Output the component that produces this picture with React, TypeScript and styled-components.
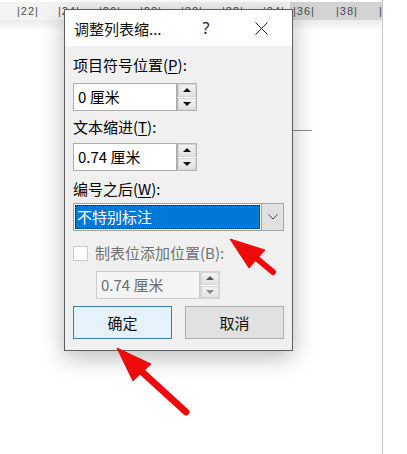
import styled, { createGlobalStyle } from "styled-components";

const GlobalStyle = createGlobalStyle`
  html, body {
    margin: 0;
    padding: 0;
    background: #fff;
  }
  body {
    font-family: "Noto Sans CJK SC", "Noto Sans", sans-serif;
  }
`;

const Page = styled.div`
  position: relative;
  width: 407px;
  height: 454px;
  overflow: hidden;
  background: #fff;
`;

const Sheet = styled.div`
  width: 382px;
  height: 100%;
  border-right: 1px solid #c9c9c9;
  display: flex;
  flex-direction: column;
`;

const Ruler = styled.div`
  display: flex;
  height: 18px;
  margin-top: 2px;
  background: linear-gradient(to right, #f3f3f3 0 290px, #d3d3d3 290px);
`;

const RulerGroup = styled.div<{ $width: number; $pad: number }>`
  display: flex;
  width: ${(p) => p.$width}px;
  padding-left: ${(p) => p.$pad}px;
  box-sizing: border-box;
`;

const RulerMark = styled.span<{ $step: number }>`
  flex: 0 0 ${(p) => p.$step}px;
  font-family: "Liberation Sans", sans-serif;
  font-size: 11px;
  line-height: 18px;
  color: #4a4a4a;
  letter-spacing: 1px;
  white-space: pre;
`;

const Shade = styled.div`
  height: 10px;
  background: linear-gradient(#ebebeb, #f6f6f6 70%, #fff);
`;

const DocLine = styled.div`
  margin: 100px 0 0 250px;
  width: 62px;
  height: 1px;
  background: #8c8c8c;
`;

const Dialog = styled.div`
  position: absolute;
  top: 9px;
  left: 64px;
  width: 229px;
  height: 342px;
  box-sizing: border-box;
  border: 1px solid #5f5f5f;
  background: #f0f0f0;
  box-shadow: 0 6px 22px rgba(0, 0, 0, 0.28);
  display: flex;
  flex-direction: column;
`;

const TitleBar = styled.div`
  height: 36px;
  background: #fff;
  display: flex;
  align-items: center;
  padding: 0 16px 0 9px;
`;

const Title = styled.span`
  font-size: 15px;
  color: #111;
  flex: 1;
`;

const TitleButton = styled.span`
  width: 30px;
  height: 30px;
  display: flex;
  align-items: center;
  justify-content: center;
  font-family: "Noto Sans", sans-serif;
  font-size: 16px;
  color: #222;
  & + & {
    margin-left: 25px;
  }
`;

const Body = styled.div`
  flex: 1;
  padding: 0 8px;
  display: flex;
  flex-direction: column;
`;

const Label = styled.div<{ $mt: number; $disabled?: boolean }>`
  margin-top: ${(p) => p.$mt}px;
  height: 20px;
  font-size: 15px;
  line-height: 20px;
  color: ${(p) => (p.$disabled ? "#707070" : "#000")};
  display: flex;
  align-items: center;
  u {
    text-decoration: underline;
    text-underline-offset: 2px;
  }
`;

const SpinRow = styled.div<{ $mt: number; $indent?: number }>`
  margin-top: ${(p) => p.$mt}px;
  margin-left: ${(p) => p.$indent || 0}px;
  display: flex;
  height: 28px;
`;

const TextField = styled.div<{ $disabled?: boolean }>`
  width: 104px;
  box-sizing: border-box;
  border: 1px solid ${(p) => (p.$disabled ? "#cccccc" : "#adadad")};
  background: ${(p) => (p.$disabled ? "#f4f4f4" : "#fff")};
  color: ${(p) => (p.$disabled ? "#6d6d6d" : "#000")};
  font-size: 15px;
  line-height: 26px;
  padding-left: 4px;
`;

const Spinner = styled.div<{ $disabled?: boolean }>`
  width: 20px;
  box-sizing: border-box;
  border: 1px solid ${(p) => (p.$disabled ? "#d4d4d4" : "#b4b4b4")};
  display: flex;
  flex-direction: column;
  gap: 1px;
  background: #fff;
`;

const SpinButton = styled.div<{ $down?: boolean; $disabled?: boolean }>`
  flex: 1;
  background: linear-gradient(#f2f2f2, #e2e2e2);
  border: 1px solid #d6d6d6;
  display: flex;
  align-items: center;
  justify-content: center;
  &::after {
    content: "";
    border-left: 4px solid transparent;
    border-right: 4px solid transparent;
    ${(p) =>
      p.$down
        ? `border-top: 4px solid ${p.$disabled ? "#8a8a8a" : "#111"};`
        : `border-bottom: 4px solid ${p.$disabled ? "#555" : "#111"};`}
  }
`;

const Select = styled.div`
  margin-top: 4px;
  height: 28px;
  box-sizing: border-box;
  border: 1px solid #a3a3a3;
  background: #fff;
  display: flex;
`;

const SelectValue = styled.div`
  flex: 1;
  margin: 1px;
  background: #0078d7;
  outline: 1px dotted #1a1a1a;
  outline-offset: -1px;
  color: #fff;
  font-size: 15px;
  line-height: 24px;
  padding-left: 2px;
`;

const SelectArrow = styled.div`
  width: 21px;
  background: #e1e1e1;
  border-left: 1px solid #a3a3a3;
  display: flex;
  align-items: center;
  justify-content: center;
`;

const CheckRow = styled.div`
  margin-top: 12px;
  display: flex;
  align-items: center;
  gap: 7px;
  height: 20px;
`;

const CheckBox = styled.span`
  width: 15px;
  height: 15px;
  box-sizing: border-box;
  border: 1px solid #cccccc;
  background: #fff;
`;

const ButtonRow = styled.div`
  margin-top: 7px;
  display: flex;
  gap: 13px;
`;

const Button = styled.div<{ $primary?: boolean }>`
  width: 99px;
  height: 33px;
  box-sizing: border-box;
  border: 1px solid ${(p) => (p.$primary ? "#3d7db0" : "#adadad")};
  background: ${(p) => (p.$primary ? "#e5f1fb" : "#e1e1e1")};
  display: flex;
  align-items: center;
  justify-content: center;
  font-size: 15px;
  color: #111;
`;

const Overlay = styled.svg`
  position: absolute;
  inset: 0;
  pointer-events: none;
`;

function Spin({ value, disabled }: { value: string; disabled?: boolean }) {
  return (
    <>
      <TextField $disabled={disabled}>{value}</TextField>
      <Spinner $disabled={disabled}>
        <SpinButton $disabled={disabled} />
        <SpinButton $down $disabled={disabled} />
      </Spinner>
    </>
  );
}

const lightMarks = ["|22|", "|24|", "|26|", "|28|", "|30|", "|32|", "|34|"];
const darkMarks = ["|36|", "|38|", "|"];

export default function App() {
  return (
    <Page>
      <GlobalStyle />
      <Sheet>
        <Ruler>
          <RulerGroup $width={290} $pad={17}>
            {lightMarks.map((m) => (
              <RulerMark key={m} $step={41}>
                {m}
              </RulerMark>
            ))}
          </RulerGroup>
          <RulerGroup $width={92} $pad={3}>
            {darkMarks.map((m) => (
              <RulerMark key={m} $step={43}>
                {m}
              </RulerMark>
            ))}
          </RulerGroup>
        </Ruler>
        <Shade />
        <DocLine />
      </Sheet>

      <Dialog>
        <TitleBar>
          <Title>调整列表缩...</Title>
          <TitleButton>?</TitleButton>
          <TitleButton>
            <svg width="13" height="13" viewBox="0 0 13 13">
              <path d="M0.5 0.5L12.5 12.5M12.5 0.5L0.5 12.5" stroke="#222" strokeWidth="1" />
            </svg>
          </TitleButton>
        </TitleBar>
        <Body>
          <Label $mt={9}>
            项目符号位置(<u>P</u>):
          </Label>
          <SpinRow $mt={8}>
            <Spin value="0 厘米" />
          </SpinRow>
          <Label $mt={6}>
            文本缩进(<u>T</u>):
          </Label>
          <SpinRow $mt={6}>
            <Spin value="0.74 厘米" />
          </SpinRow>
          <Label $mt={8}>
            编号之后(<u>W</u>):
          </Label>
          <Select>
            <SelectValue>不特别标注</SelectValue>
            <SelectArrow>
              <svg width="10" height="6" viewBox="0 0 10 6">
                <path d="M0.5 0.5L5 5L9.5 0.5" fill="none" stroke="#444" strokeWidth="1" />
              </svg>
            </SelectArrow>
          </Select>
          <CheckRow>
            <CheckBox />
            <Label $mt={0} $disabled>
              制表位添加位置(B):
            </Label>
          </CheckRow>
          <SpinRow $mt={8} $indent={23}>
            <Spin value="0.74 厘米" disabled />
          </SpinRow>
          <ButtonRow>
            <Button $primary>确定</Button>
            <Button>取消</Button>
          </ButtonRow>
        </Body>
      </Dialog>

      <Overlay width="407" height="454" viewBox="0 0 407 454">
        <g fill="#ee0a0a" stroke="#ee0a0a">
          <polygon points="230,239 249,268 265,250" strokeWidth="1" strokeLinejoin="round" />
          <line x1="255" y1="257" x2="273" y2="272" strokeWidth="6" strokeLinecap="round" />
          <polygon points="117,348 133,381 151,364" strokeWidth="1" strokeLinejoin="round" />
          <line x1="140" y1="370" x2="186" y2="412" strokeWidth="7" strokeLinecap="round" />
        </g>
      </Overlay>
    </Page>
  );
}
